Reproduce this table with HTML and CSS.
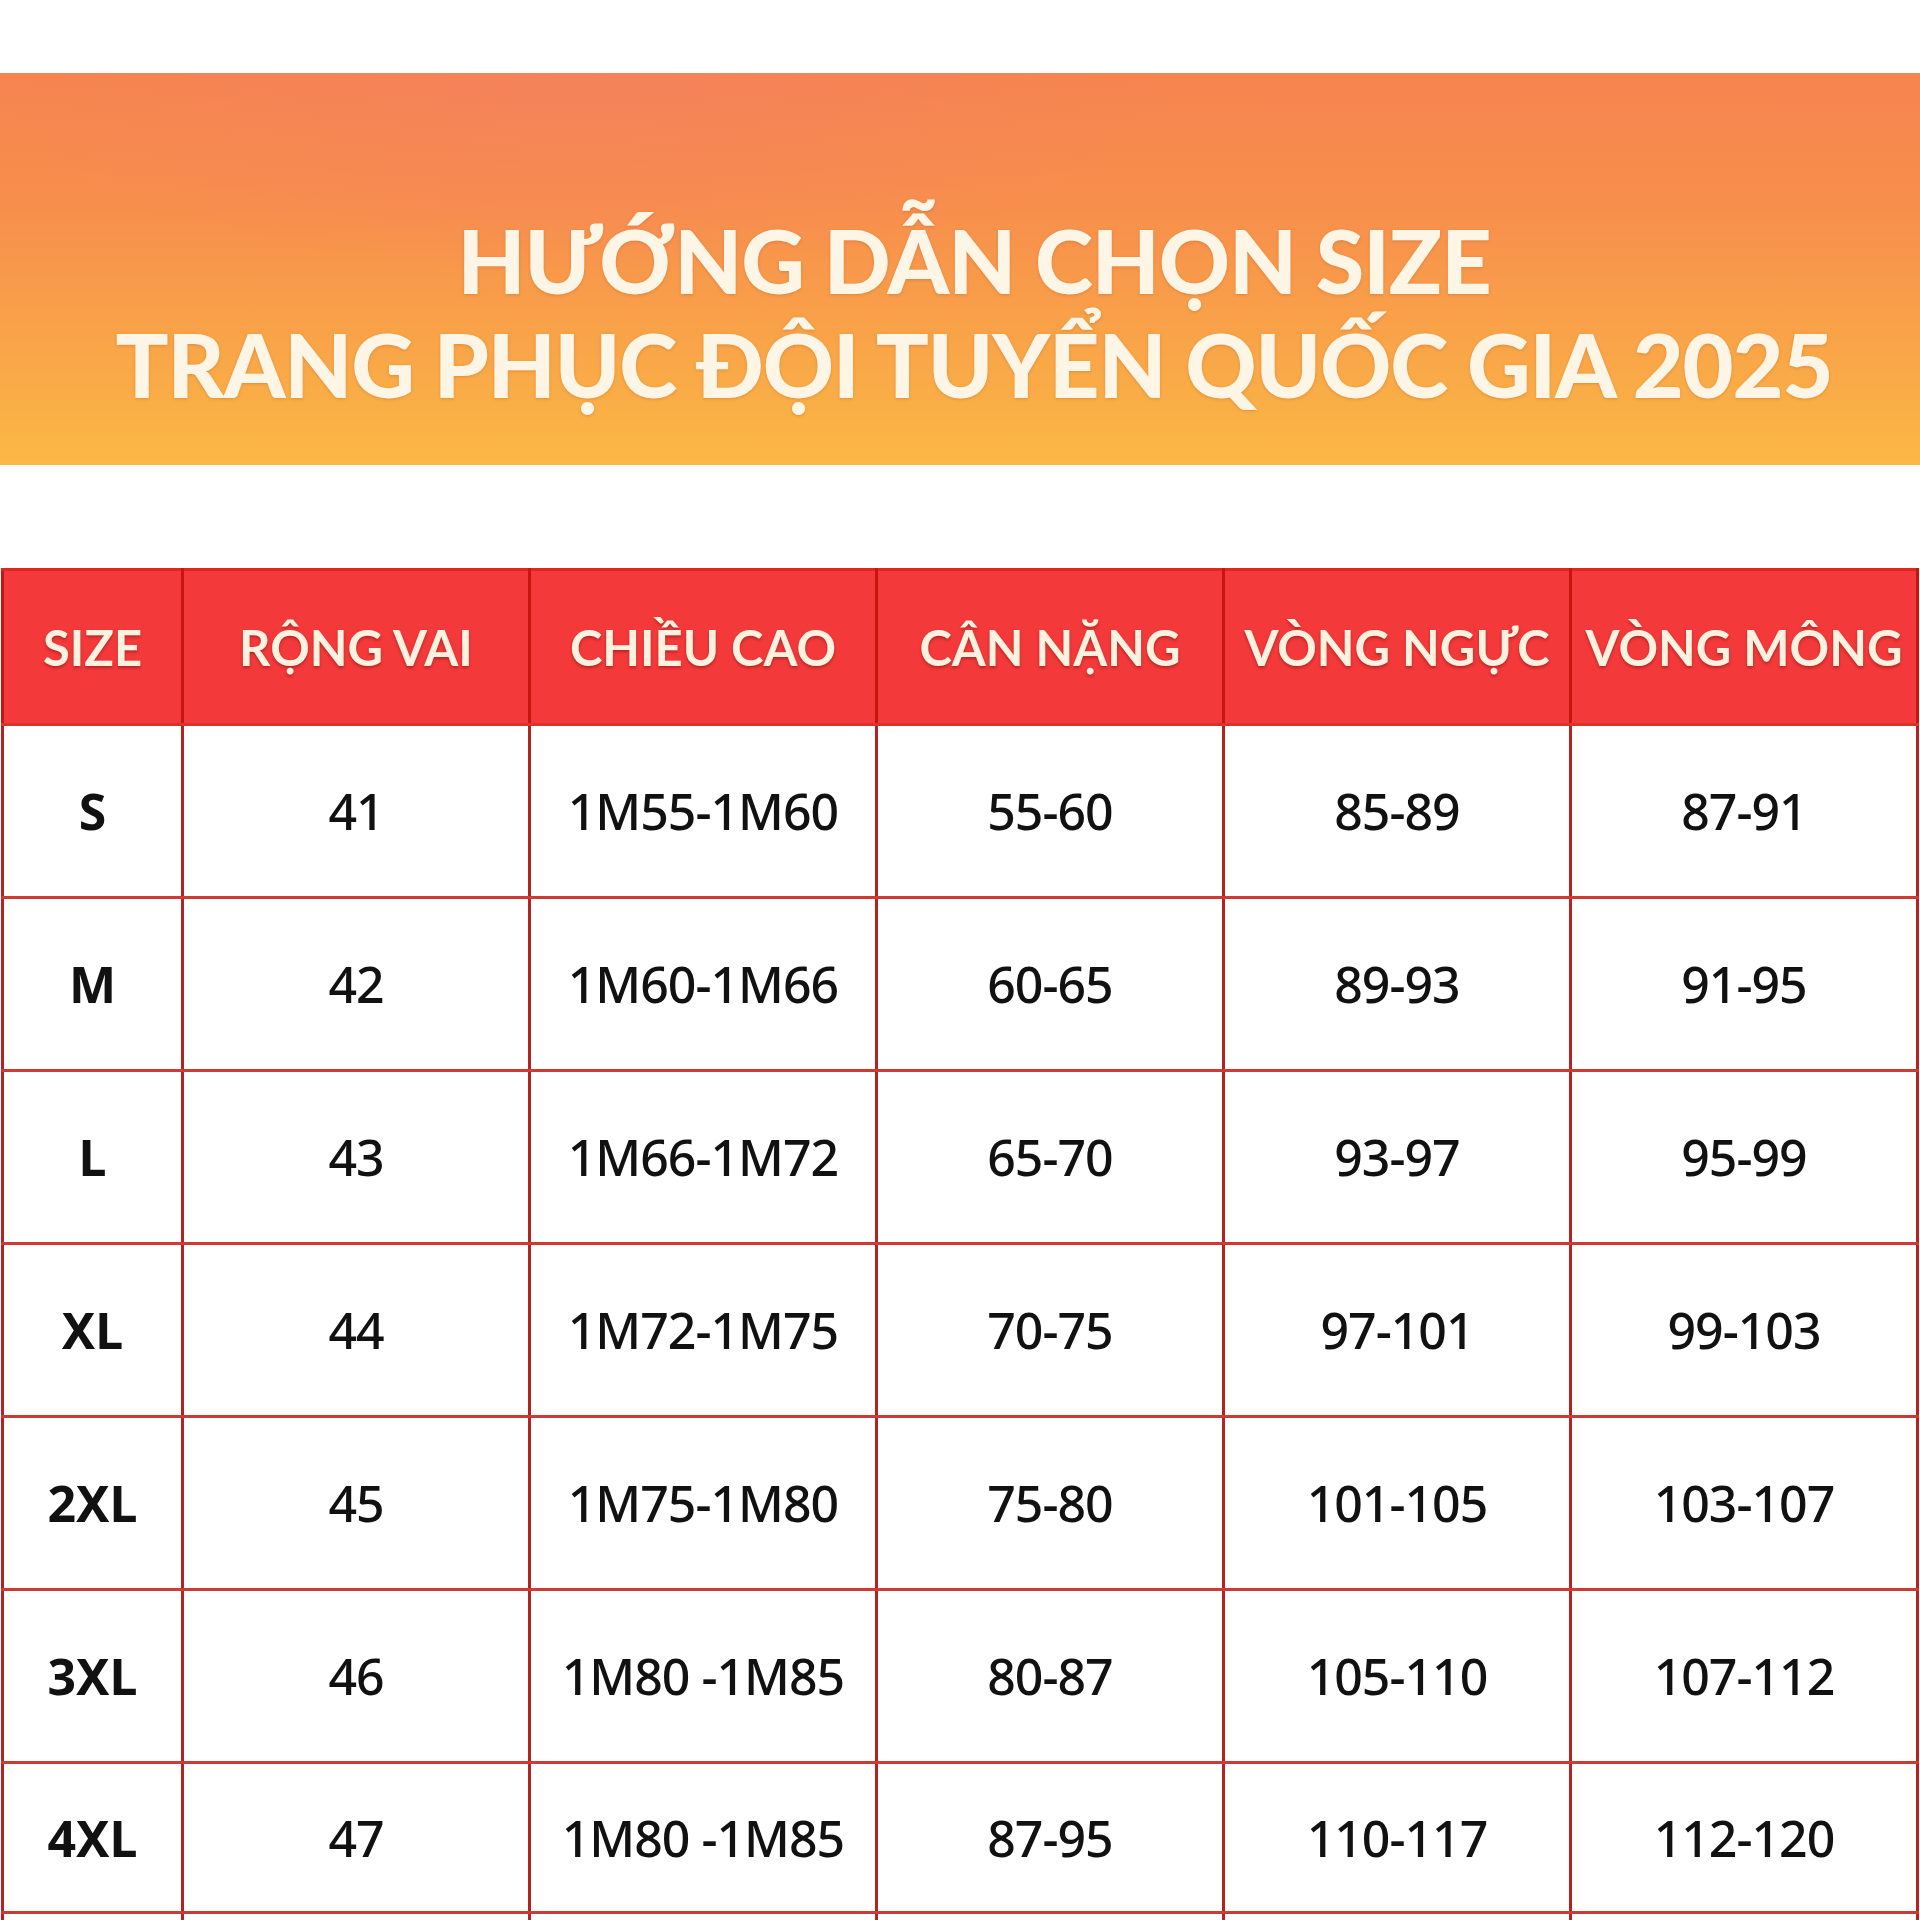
FILE: index.html
```html
<!DOCTYPE html>
<html lang="vi">
<head>
<meta charset="utf-8">
<title>Hướng dẫn chọn size</title>
<link rel="stylesheet" href="styles.css">
</head>
<body>
<header class="banner">
  <h1 class="title">
    <span class="title-line">HƯỚNG DẪN CHỌN SIZE</span>
    <span class="title-line">TRANG PHỤC ĐỘI TUYỂN QUỐC GIA 2025</span>
  </h1>
</header>
<main class="chart">
  <table class="size-table">
    <colgroup>
      <col class="c-size"><col class="c-data"><col class="c-data"><col class="c-data"><col class="c-data"><col class="c-data">
    </colgroup>
    <thead>
      <tr>
        <th>SIZE</th><th>RỘNG VAI</th><th>CHIỀU CAO</th><th>CÂN NẶNG</th><th>VÒNG NGỰC</th><th>VÒNG MÔNG</th>
      </tr>
    </thead>
    <tbody>
      <tr><td class="sz">S</td><td>41</td><td>1M55-1M60</td><td>55-60</td><td>85-89</td><td>87-91</td></tr>
      <tr><td class="sz">M</td><td>42</td><td>1M60-1M66</td><td>60-65</td><td>89-93</td><td>91-95</td></tr>
      <tr><td class="sz">L</td><td>43</td><td>1M66-1M72</td><td>65-70</td><td>93-97</td><td>95-99</td></tr>
      <tr><td class="sz">XL</td><td>44</td><td>1M72-1M75</td><td>70-75</td><td>97-101</td><td>99-103</td></tr>
      <tr><td class="sz">2XL</td><td>45</td><td>1M75-1M80</td><td>75-80</td><td>101-105</td><td>103-107</td></tr>
      <tr><td class="sz">3XL</td><td>46</td><td>1M80 -1M85</td><td>80-87</td><td>105-110</td><td>107-112</td></tr>
      <tr class="last"><td class="sz">4XL</td><td>47</td><td>1M80 -1M85</td><td>87-95</td><td>110-117</td><td>112-120</td></tr>
      <tr class="tail"><td></td><td></td><td></td><td></td><td></td><td></td></tr>
    </tbody>
  </table>
</main>
</body>
</html>
```
FILE: styles.css
```css
html, body {
  margin: 0;
  padding: 0;
  background: #ffffff;
}
body {
  width: 1920px;
  font-family: "Lato", "Noto Sans", sans-serif;
}
.banner {
  margin-top: 73px;
  height: 392px;
  display: flex;
  align-items: center;
  justify-content: center;
  background:
    radial-gradient(ellipse 600px 200px at 30% 0%, rgba(244,128,100,0.55), rgba(244,128,100,0) 100%),
    linear-gradient(180deg, #f6844f 0%, #f78f4c 35%, #f9a548 70%, #fbb844 100%);
}
.title {
  margin: 0;
  display: flex;
  flex-direction: column;
  align-items: center;
  gap: 6px;
  color: #fdf6e6;
  font-family: "Lato", sans-serif;
  font-weight: 900;
  font-size: 88px;
  line-height: 98px;
  letter-spacing: -1.1px;
  text-shadow: 0 1px 3px rgba(150, 60, 20, 0.25);
  padding-top: 86px;
  padding-left: 28px;
}
.chart {
  margin-top: 103px;
  padding-left: 1px;
}
.size-table {
  border-collapse: collapse;
  table-layout: fixed;
  width: 1917px;
}
.c-size { width: 180px; }
.c-data { width: 347px; }
.size-table th,
.size-table td {
  border-style: solid;
  border-width: 3px;
  border-color: #cf3a35 #b3231f;
  text-align: center;
  vertical-align: middle;
  padding: 0;
}
.size-table th {
  height: 152px;
  background: #f4393a;
  color: #fdf1df;
  font-family: "Lato", sans-serif;
  font-weight: 700;
  font-size: 49px;
  text-shadow: 0 2px 3px rgba(120, 10, 10, 0.45);
  border-color: #e2261f #c81510 #d8332c;
}
.size-table td {
  height: 170px;
  color: #111111;
  font-family: "Noto Sans", sans-serif;
  font-weight: 500;
  font-size: 50px;
  letter-spacing: -1px;
}
.size-table td.sz {
  font-weight: 700;
  letter-spacing: 0;
}
.size-table tr.last td {
  height: 147px;
}
.size-table tr.tail td {
  height: 20px;
}
```
